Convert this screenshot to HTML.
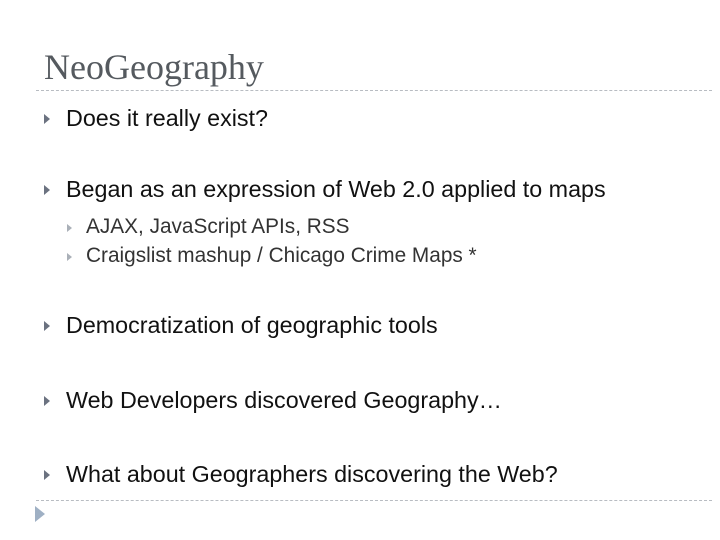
<!DOCTYPE html>
<html><head><meta charset="utf-8"><style>
html,body{margin:0;padding:0;background:#fff;}
body{width:720px;height:540px;position:relative;overflow:hidden;font-family:"Liberation Sans",sans-serif;}
.t{position:absolute;white-space:nowrap;}
.title{left:44px;top:46px;font-family:"Liberation Serif",serif;font-size:36px;color:#555a5f;}
.dash{position:absolute;left:36px;width:676px;border-top:1px dashed #b8bcc2;height:0;}
.b{font-size:23.3px;color:#111;left:66px;}
.s{font-size:20.8px;color:#333;left:86px;}
.tri{position:absolute;width:0;height:0;border-top:5px solid transparent;border-bottom:5px solid transparent;border-left:6px solid #6b7280;}
.tri.s2{border-top:4px solid transparent;border-bottom:4px solid transparent;border-left:5px solid #aab0b8;}
</style></head><body>
<div class="t title">NeoGeography</div>
<div class="dash" style="top:90px"></div>

<div class="tri" style="left:44px;top:114px"></div>
<div class="t b" style="top:105px">Does it really exist?</div>

<div class="tri" style="left:44px;top:185px"></div>
<div class="t b" style="top:176px">Began as an expression of Web 2.0 applied to maps</div>

<div class="tri s2" style="left:67px;top:224px"></div>
<div class="t s" style="top:215px">AJAX, JavaScript APIs, RSS</div>
<div class="tri s2" style="left:67px;top:253px"></div>
<div class="t s" style="top:244px">Craigslist mashup / Chicago Crime Maps *</div>

<div class="tri" style="left:44px;top:321px"></div>
<div class="t b" style="top:312px">Democratization of geographic tools</div>

<div class="tri" style="left:44px;top:396px"></div>
<div class="t b" style="top:387px">Web Developers discovered Geography…</div>

<div class="tri" style="left:44px;top:470px"></div>
<div class="t b" style="top:461px">What about Geographers discovering the Web?</div>

<div class="dash" style="top:500px"></div>
<div style="position:absolute;left:35px;top:506px;width:0;height:0;border-top:8px solid transparent;border-bottom:8px solid transparent;border-left:10px solid #9fb0c4;"></div>
</body></html>
